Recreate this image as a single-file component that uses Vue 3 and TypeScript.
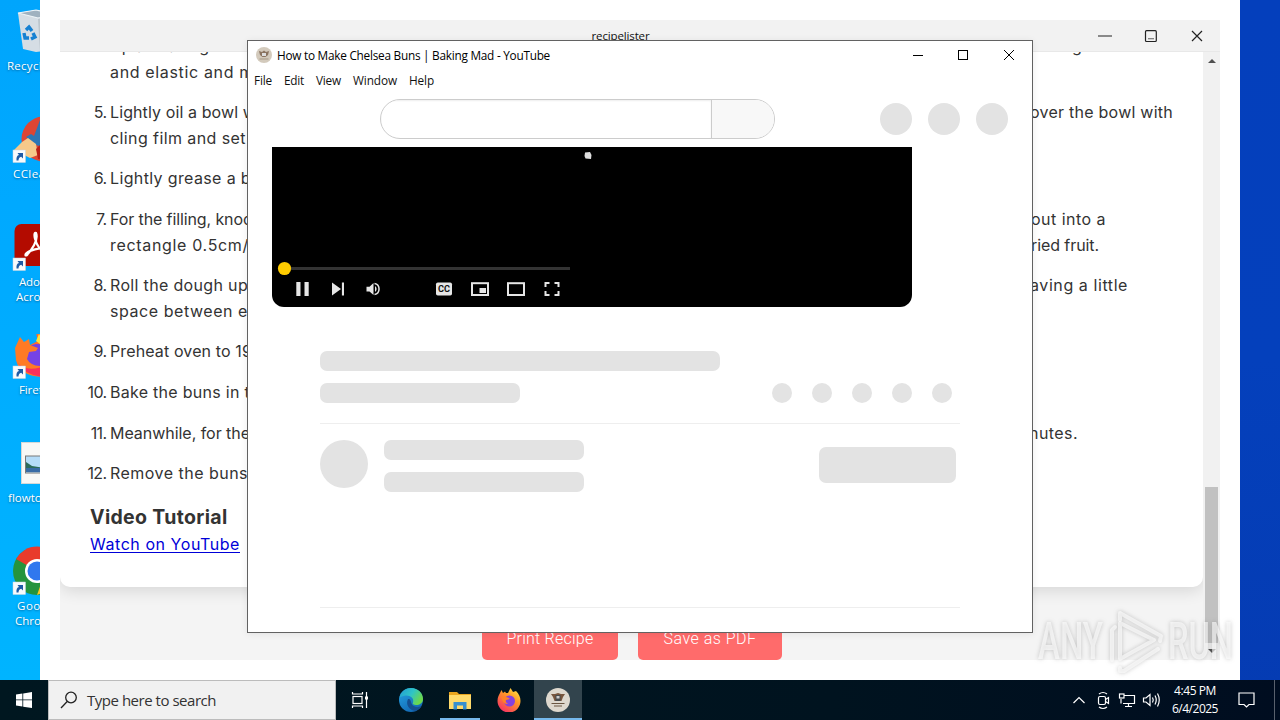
<script setup lang="ts">
interface Line { left: string; lw: number; right?: string; rx?: number; rw?: number }
interface Step { n?: number; lines: Line[] }

// Distributes letter spacing so that a label takes up the given width.
const vFit = {
  mounted(el: HTMLElement, binding: { value: number | undefined }) {
    if (!binding.value) return
    const range = document.createRange()
    range.selectNodeContents(el)
    const natural = range.getBoundingClientRect().width
    const count = (el.textContent || '').length
    el.style.letterSpacing = ((binding.value - natural) / count).toFixed(3) + 'px'
  },
}

const shortcuts = [
  { t: 'Recycle Bin', x: 7, y: 58, w: 63 },
  { t: 'CCleaner', x: 13, y: 166, w: 52 },
  { t: 'Adobe', x: 19, y: 274, w: 34 },
  { t: 'Acrobat', x: 16, y: 289, w: 42 },
  { t: 'Firefox', x: 19, y: 382, w: 36 },
  { t: 'flowtopics.jpg', x: 8, y: 490, w: 74 },
  { t: 'Google', x: 17, y: 598, w: 41 },
  { t: 'Chrome', x: 15, y: 613, w: 43 },
]

const steps: Step[] = [
  { lines: [
    { left: 'Up and along', lw: 99, right: 'ening', rx: 1039, rw: 43 },
    { left: 'and elastic and m', lw: 144 },
  ] },
  { n: 5, lines: [
    { left: 'Lightly oil a bowl w', lw: 146, right: 'over the bowl with', rx: 1030, rw: 143 },
    { left: 'cling film and set', lw: 136 },
  ] },
  { n: 6, lines: [{ left: 'Lightly grease a b', lw: 141 }] },
  { n: 7, lines: [
    { left: 'For the filling, knoc', lw: 142, right: 'out into a', rx: 1031, rw: 75 },
    { left: 'rectangle 0.5cm/', lw: 139, right: 'ried fruit.', rx: 1031, rw: 68 },
  ] },
  { n: 8, lines: [
    { left: 'Roll the dough up', lw: 138, right: 'aving a little', rx: 1030, rw: 98 },
    { left: 'space between e', lw: 138 },
  ] },
  { n: 9, lines: [{ left: 'Preheat oven to 19', lw: 142 }] },
  { n: 10, lines: [{ left: 'Bake the buns in t', lw: 140 }] },
  { n: 11, lines: [{ left: 'Meanwhile, for the', lw: 140, right: 'nutes.', rx: 1029, rw: 49 }] },
  { n: 12, lines: [{ left: 'Remove the buns', lw: 138 }] },
]

const menu = [
  { t: 'File', w: 18 }, { t: 'Edit', w: 20 }, { t: 'View', w: 25 },
  { t: 'Window', w: 44 }, { t: 'Help', w: 25 },
]
</script>

<template>
  <div class="desktop">
    <div class="icons">
      <svg width="40" height="680" viewBox="0 0 40 680">
        <!-- recycle bin -->
        <path d="M18 13 L36 10 L56 14 L52 50 L36 52 L23 49 Z" fill="#d5dde4" />
        <path d="M18 13 L36 10 L56 14 L38 18 Z" fill="#9fb1bf" stroke="#eef4f8" stroke-width="1.2" />
        <path d="M38 19 L40 52 L50 50 L54 15Z" fill="#bcc6cd" />
        <g fill="none" stroke="#1681d2" stroke-width="3.4">
          <path d="M26 30 L29 27 L32 31" /><path d="M24 33 L25 38 L29 38" /><path d="M31 39 L35 37 L33 33" />
        </g>
        <!-- cleaner -->
        <circle cx="44" cy="139" r="22.500" fill="#dd4534" />
        <path d="M26 137 L31 134 L34 136 L40 120 L45 118 L45 148 L36 145Z" fill="#2d76b6" />
        <path d="M14 150 L22 142 L28 138 L36 144 L38 155 L30 158Z" fill="#f6c98a" />
        <path d="M36 149 L42 143 L45 160 L38 159Z" fill="#b92018" />
        <!-- acrobat -->
        <rect x="14.500" y="224" width="46" height="42" rx="7" fill="#b30b00" />
        <path d="M26 256 C31 251 39 240 36 233 C33 231 34 244 43 252 M26 256 C23 253 34 248 45 248" fill="none" stroke="#fff" stroke-width="2.200" />
        <!-- fox -->
        <circle cx="38" cy="355" r="21" fill="#ff6a2b" />
        <path d="M14 333 H36 L38 341 L30 345 L24 342 L16 347Z" fill="#00acff" />
        <circle cx="37" cy="356" r="12" fill="#7542e5" />
        <path d="M15 348 L20 337 L24 342 L29 339 L30 345 L38 348 L36 351 L29 352 L27 359 Q31 367 45 366 L45 377 Q20 377 16 360Z" fill="#ff7a24" />
        <path d="M17 362 Q25 373 45 366 L45 377 Q25 376 17 362Z" fill="#f92f5c" />
        <path d="M36 341 L39 334 L45 342 L45 348Z" fill="#ffe13a" />
        <!-- picture file -->
        <rect x="21.500" y="442.500" width="34" height="41" fill="#f8f8f6" stroke="#d4d8d8" />
        <rect x="25.500" y="456" width="24" height="17" fill="#b5dcf8" stroke="#787878" />
        <path d="M26 462 L32 466 L45 468 L45 472 L26 472Z" fill="#2c6b5a" />
        <path d="M26 468 H45 V472 H26Z" fill="#386ba5" />
        <!-- chrome -->
        <circle cx="37" cy="571" r="24" fill="#25943d" />
        <path d="M37 571 L16 559 A24 24 0 0 1 58 559 Z" fill="#e93b2c" />
        <path d="M37 595 L44 575 L50 590Z" fill="#fcc629" />
        <circle cx="37" cy="571" r="12" fill="#fff" /><circle cx="37" cy="571" r="9.500" fill="#3078ee" />
        <g v-for="y in [150, 258, 366, 582]" :key="y" :transform="`translate(13 ${y})`">
          <rect width="12.500" height="12.500" fill="#f7fafc" stroke="#c5d3dd" stroke-width=".5" />
          <path d="M3.500 10.500 Q3 5.500 6 5 L4.500 3 H10 V8.500 L8.200 6.700 Q5.500 7.500 5.500 10.500Z" fill="#1e5aa5" />
        </g>
      </svg>
      <p v-for="s in shortcuts" :key="s.t" class="lab" :style="{ left: s.x + 'px', top: s.y + 'px' }"><span v-fit="s.w">{{ s.t }}</span></p>
    </div>

    <section class="app-frame">
      <div class="recipe-win">
        <header class="recipe-bar">
          <span class="recipe-title"><span v-fit="58">recipelister</span></span>
          <svg class="ctl" width="110" height="16" viewBox="0 0 110 16" fill="none" stroke="#222" stroke-width="1.200">
            <path d="M2 8 H16" stroke="#444" />
            <rect x="49.500" y="2.700" width="10.800" height="10.800" rx="1" /><path d="M52 10.700 H58" stroke="#777" />
            <path d="M96 3 L106 13 M106 3 L96 13" />
          </svg>
        </header>
        <div class="recipe-body">
          <main class="page">
            <article class="card">
              <div v-for="(s, i) in steps" :key="i" class="step">
                <span class="num">{{ s.n ? s.n + '.' : '' }}</span>
                <div class="txt">
                  <div v-for="(l, j) in s.lines" :key="j" class="line">
                    <span class="left"><span v-fit="l.lw">{{ l.left }}</span></span>
                    <span v-if="l.right" class="right" :style="{ marginLeft: (l.rx || 0) - 250 + 'px' }"><span v-fit="l.rw">{{ l.right }}</span></span>
                  </div>
                </div>
              </div>
              <h3><span v-fit="137.5">Video Tutorial</span></h3>
              <a class="watch"><span v-fit="150">Watch on YouTube</span></a>
            </article>
            <div class="actions">
              <button class="print"><span v-fit="87">Print Recipe</span></button>
              <button class="save"><span v-fit="93">Save as PDF</span></button>
            </div>
          </main>
          <div class="scroll">
            <i class="up"></i><i class="thumb"></i><i class="down"></i>
          </div>
        </div>
      </div>
    </section>

    <section class="video-win">
      <header class="video-bar">
        <svg width="16" height="16" viewBox="0 0 16 16">
          <circle cx="8" cy="8" r="8" fill="#d3cabc" />
          <path d="M3 4 L6 5 L8 3.500 L10 5 L13 4 L12 8 L9.500 10 H6.500 L4 8Z" fill="#8a7460" /><path d="M6 6h4v3H6z" fill="#ddd" />
          <path d="M3.500 12 H12.500" stroke="#a59885" />
        </svg>
        <span class="video-title"><span v-fit="273">How to Make Chelsea Buns | Baking Mad - YouTube</span></span>
        <svg class="ctl2" width="104" height="12" viewBox="0 0 104 12" fill="none" stroke="#000">
          <path d="M0 6.500 H10" /><rect x="45.500" y="1.500" width="9" height="9" /><path d="M91 1 L101 11 M101 1 L91 11" />
        </svg>
      </header>
      <nav class="menu"><span v-for="m in menu" :key="m.t" :style="{ width: m.w + 'px' }"><span v-fit="m.w">{{ m.t }}</span></span></nav>
      <div class="mast">
        <div class="search"><span class="box"></span><span class="go"></span></div>
        <div class="dots"><i></i><i></i><i></i></div>
      </div>
      <div class="player">
        <svg width="640" height="160" viewBox="0 0 640 160">
          <path d="M313 5.500 L318 5 L319.500 8 L319 12 L313.500 11.500 L312.500 9Z" fill="#ddd" />
          <path d="M12 121.500 H298" stroke="#333" stroke-width="3" />
          <circle cx="12.500" cy="121.500" r="6.600" fill="#fc0" />
          <g fill="#e6e6e6">
            <path d="M24.300 135 h4.200 v14 h-4.200z M32.500 135 h4.200 v14 h-4.200z" />
            <path d="M60 135.500 V148.500 L69 142z M69.900 135.500 h2.100 v13 h-2.100z" />
            <path d="M94.500 139.800 h3 L101.500 136 V148 L97.500 144.500 H94.500z" />
            <path d="M103 139 a3.600 3.600 0 0 1 0 6z" />
            <rect x="164" y="135.500" width="16" height="13" rx="1.800" />
          </g>
          <path d="M102.500 136.500 a5.600 5.600 0 0 1 0 11" fill="none" stroke="#e6e6e6" stroke-width="1.500" />
          <text x="166" y="145" textLength="12" lengthAdjust="spacingAndGlyphs" font-family="Roboto" font-weight="700" font-size="8.500" fill="#111">CC</text>
          <g fill="none" stroke="#e6e6e6" stroke-width="2">
            <rect x="200" y="136.200" width="16" height="11.800" />
            <rect x="236" y="136.200" width="16" height="11.800" />
            <path d="M273.500 140 V136 H277.500 M282.500 136 H286.500 V140 M286.500 144 V148 H282.500 M277.500 148 H273.500 V144" />
          </g>
          <rect x="207.500" y="141" width="6.500" height="5" fill="#e6e6e6" />
        </svg>
      </div>
      <div class="skeleton">
        <b class="title"></b>
        <div class="meta"><b class="sub"></b><div class="acts"><i v-for="n in 5" :key="n"></i></div></div>
        <div class="owner">
          <i class="avatar"></i>
          <div class="names"><b></b><b></b></div>
          <b class="subscribe"></b>
        </div>
      </div>
    </section>

    <svg class="mark" width="204" height="70" viewBox="0 0 204 70">
      <g fill="#fff" fill-opacity=".62" font-family="Roboto" font-size="51" font-weight="500">
        <text x="2" y="54" textLength="65" lengthAdjust="spacingAndGlyphs">ANY</text>
        <text x="132" y="54" textLength="65" lengthAdjust="spacingAndGlyphs">RUN</text>
      </g>
      <g fill="none" stroke="#fff" stroke-opacity=".62" stroke-width="4" stroke-linejoin="round" stroke-linecap="round">
        <path d="M84 18 V54 L118 35 Z" />
        <path d="M76 55 V25 L79 22 M84 15 V8 L125 31 L124 36 M84 63 V66 L88 66 L122 44" />
      </g>
    </svg>

    <footer class="taskbar">
      <div class="start"><svg width="16" height="16" viewBox="0 0 16 16" fill="#fff"><path d="M0 2.400 L6.400 1.500 V7.500 H0z M7.200 1.400 L16 0 V7.500 H7.200z M0 8.300 H6.400 V14.500 L0 13.600z M7.200 8.300 H16 V16 L7.200 14.700z" /></svg></div>
      <div class="find">
        <svg width="18" height="18" viewBox="0 0 18 18" fill="none" stroke="#222" stroke-width="1.300"><circle cx="11" cy="6.500" r="5.300" /><path d="M7.200 10.500 L1 17" /></svg>
        <span v-fit="129">Type here to search</span>
      </div>
      <div class="task view">
        <svg width="18" height="18" viewBox="0 0 18 18" fill="none" stroke="#fff" stroke-width="1.200"><rect x="2" y="5.500" width="9" height="7" /><path d="M1.500 1 V3 H11.500 V1 M1.500 17 V15 H11.500 V17 M15.500 1 V17" /><path d="M14 5.500 h3 v3 h-3z" fill="#fff" stroke="none" /></svg>
      </div>
      <div class="task">
        <svg width="24" height="24" viewBox="0 0 24 24">
          <defs>
            <linearGradient id="eg" x1="0" y1="0" x2="1" y2=".5"><stop offset="0" stop-color="#219bd6" /><stop offset=".55" stop-color="#2fc4c6" /><stop offset="1" stop-color="#6cd84a" /></linearGradient>
            <linearGradient id="eb" x1="0" y1="0" x2=".6" y2="1"><stop offset="0" stop-color="#26a5e4" /><stop offset="1" stop-color="#1268b4" /></linearGradient>
          </defs>
          <circle cx="12" cy="12" r="12" fill="url(#eb)" />
          <path d="M.4 9.500 C2 3 7 0 12 0 C19 0 24 5 24 11 C24 15 20.500 17 17 17 C14.500 17 13 16 14 14.500 C15.500 10 11 7 6.500 7.500 C3.500 8 1.300 9 .4 9.500Z" fill="url(#eg)" />
          <path d="M9 11 C6 17 11 23 17 22.700 C20 21.500 21.500 20 22.500 18 C18 20.500 13.500 18.500 12.500 15.500 C11.500 13 12 11 9 11Z" fill="#154f90" />
        </svg>
      </div>
      <div class="task open">
        <svg width="22" height="19" viewBox="0 0 22 19"><path d="M0 1 H8 L10 3 H22 V18 H0z" fill="#e9a51f" /><path d="M0 4 H22 V18 H0z" fill="#ffda6b" /><path d="M4.500 18.500 V11 H17.500 V18.500 H14 V14.500 H8 V18.500z" fill="#388fce" /></svg>
      </div>
      <div class="task">
        <svg width="24" height="24" viewBox="0 0 24 24">
          <defs><linearGradient id="fg" x1=".9" y1="0" x2=".2" y2="1"><stop offset="0" stop-color="#ffe84a" /><stop offset=".4" stop-color="#ff9a25" /><stop offset="1" stop-color="#f52b68" /></linearGradient></defs>
          <path d="M3 5 L4.500 2 L6 5 L8 3.500 L9 5 L11 5 L13.500 0 L16 4 L19 3 C22 6 23.500 9 23.500 13 A11.500 11.500 0 0 1 .5 13 C.5 9 2 7 3 5Z" fill="url(#fg)" />
          <circle cx="12.500" cy="13" r="5.500" fill="#8541de" /><path d="M4 8 L11 9.500 L13 11 L9 12 Q8 14 11 16 Q6 17 4 8Z" fill="#ff8226" />
        </svg>
      </div>
      <div class="task active">
        <svg width="24" height="24" viewBox="0 0 24 24"><circle cx="12" cy="12" r="12" fill="#ded8ce" /><path d="M5 6 L9 6 L12 5 L15 6 L19 6 L17 9 L15.500 13 H8.500 L7 9Z" fill="#77553d" /><path d="M9.500 7 h5 v6 h-5z" fill="#484b4d" /><path d="M10.500 8 h3 v2.500 h-3z" fill="#ccc" /><path d="M5.500 15.500 H18.500 M8 18 H16" stroke="#6a5541" stroke-width="1.200" /></svg>
      </div>
      <div class="tray">
        <svg width="92" height="20" viewBox="0 0 92 20" fill="none" stroke="#fff" stroke-width="1.200">
          <path d="M1.500 13 L7 7.500 L12.500 13" />
          <rect x="26.500" y="6.500" width="7" height="8" rx="1.500" /><path d="M33.500 9.500 L36.500 7.500 V13.500 L33.500 11.500 M27 4 Q31 1 35 4 M27 17 Q31 20 35 17" />
          <path d="M52 5.500 H62.500 V13.500 H51 M56.500 13.500 V16.500 M53 16.500 H60 M49 13.500 V9" /><rect x="47.500" y="4" width="4.500" height="4" />
          <path d="M71.500 8 H74 L78 4.500 V15.500 L74 12 H71.500z M80.500 7.500 Q82 10 80.500 12.500 M83 5.500 Q85.500 10 83 14.500 M85.500 3.500 Q89 10 85.500 16.500" />
        </svg>
        <div class="clock"><span><span v-fit="42">4:45 PM</span></span><span><span v-fit="46">6/4/2025</span></span></div>
        <svg class="note" width="17" height="18" viewBox="0 0 17 18" fill="none" stroke="#fff" stroke-width="1.200"><path d="M1 2 H16 V13.500 H11 L8.500 16 L6 13.500 H1z" /></svg>
        <i class="peek"></i>
      </div>
    </footer>
  </div>
</template>

<style>
html, body { margin: 0; overflow: hidden; }
</style>
<style scoped>
* { box-sizing: border-box; }
.desktop { position: relative; width: 1280px; height: 720px; overflow: hidden; background: linear-gradient(#043fbc, #0440bc 50%, #053bb2); font-family: "Open Sans", "Noto Sans", sans-serif; white-space: nowrap; }
.icons { position: absolute; left: 0; top: 0; width: 40px; height: 680px; overflow: hidden; background: linear-gradient(#00a5fc, #00a9ff 30%, #00b4ff); }
.icons svg { display: block; }
.lab { position: absolute; margin: 0; font-size: 11.5px; line-height: 16px; color: #fff; text-shadow: 0 1px 2px rgba(0, 50, 90, .55); }
.app-frame { position: absolute; left: 40px; top: 0; width: 1200px; height: 680px; padding: 20px; background: #fff; }
.recipe-win { height: 640px; display: flex; flex-direction: column; }
.recipe-bar { position: relative; height: 32px; flex: none; background: #f2f2f2; border-bottom: 1px solid #e8e8e8; display: flex; justify-content: center; }
.recipe-title { font-size: 11.5px; line-height: 32px; color: #111; margin-right: 39px; }
.ctl { position: absolute; left: 1036px; top: 8px; }
.recipe-body { height: 608px; display: flex; overflow: hidden; }
.page { width: 1143px; height: 608px; background: #f4f4f4; overflow: hidden; }
.card { height: 535px; background: #fff; border-radius: 0 0 10px 10px; box-shadow: 0 4px 16px rgba(0, 0, 0, .12); padding-left: 20px; overflow: hidden; font-family: Inter, sans-serif; font-size: 16px; line-height: 25.6px; color: #333; }
.step { display: flex; margin-bottom: 15px; }
.step:first-child { margin-top: -17.900px; }
.num { width: 30px; padding-right: 3.500px; text-align: right; letter-spacing: -.6px; flex: none; }
.line { display: flex; height: 25.600px; }
.left { width: 140px; overflow: hidden; flex: none; }
h3 { margin: 0 0 0 10px; font-size: 19.5px; line-height: 30px; font-weight: 700; }
.watch { display: inline-block; margin-left: 10px; line-height: 25px; color: #0000d8; text-decoration: underline; text-underline-offset: 2px; text-decoration-thickness: 1px; }
.actions { display: flex; gap: 20px; padding: 30px 0 0 422px; }
button { height: 43px; border: 0; border-radius: 5px; padding: 0; background: #ff6b6b; color: #fff; font: 300 16px/42px Roboto, sans-serif; }
.print { width: 136px; } .save { width: 144px; }
.scroll { width: 17px; height: 608px; background: #f1f1f1; display: flex; flex-direction: column; align-items: center; }
.up, .down { border: 4px solid transparent; }
.up { border-top: 0; border-bottom-color: #505050; margin-top: 7px; }
.thumb { width: 13px; height: 156px; margin-top: 424px; background: #c1c1c1; }
.down { border-bottom: 0; border-top-color: #505050; margin-top: 6px; }
.video-win { position: absolute; left: 247px; top: 40px; width: 786px; height: 593px; background: #fff; border: 1px solid #626262; box-shadow: 0 1px 7px rgba(0, 0, 0, .08); }
.video-bar { display: flex; align-items: center; height: 30px; padding: 0 15px 2px 8px; }
.video-title { margin-left: 5px; font-size: 11.8px; color: #000; line-height: 20px; }
.ctl2 { margin-left: auto; }
.menu { display: flex; gap: 12px; height: 24px; padding-left: 6px; font-size: 11.8px; line-height: 19px; color: #111; }
.mast { display: flex; height: 52px; padding: 4px 24px 8px 132px; justify-content: space-between; align-items: center; }
.search { display: flex; width: 395px; height: 40px; border: 1px solid #ccc; border-radius: 20px; overflow: hidden; }
.box { width: 331px; border-right: 1px solid #ccc; box-shadow: inset 0 1px 2px #eee; }
.go { flex: 1; background: #f8f8f8; }
.dots { display: flex; gap: 16px; }
.dots i { width: 32px; height: 32px; border-radius: 50%; background: #e3e3e3; }
.player { width: 640px; height: 160px; margin-left: 24px; background: #000; border-radius: 0 0 12px 12px; overflow: hidden; }
.player svg { display: block; }
.skeleton { margin: 44px 0 0 72px; width: 640px; height: 257px; border-bottom: 1px solid #eee; }
.skeleton b { display: block; height: 20px; border-radius: 7px; background: #e3e3e3; }
.skeleton i { display: block; border-radius: 50%; background: #e3e3e3; }
.skeleton .title { width: 400px; }
.meta { display: flex; justify-content: space-between; margin-top: 12px; height: 41px; border-bottom: 1px solid #eee; padding-right: 8px; }
.skeleton .sub { width: 200px; }
.acts { display: flex; gap: 20px; }
.acts i { width: 20px; height: 20px; }
.owner { display: flex; margin-top: 16px; }
.skeleton .avatar { width: 48px; height: 48px; margin-right: 16px; }
.names { width: 200px; display: flex; flex-direction: column; gap: 12px; }
.skeleton .subscribe { width: 137px; height: 36px; margin: 7px 4px 0 auto; }
.mark { position: absolute; left: 1036px; top: 605px; filter: drop-shadow(0 0 2px rgba(90, 90, 90, .5)); }
.taskbar { position: absolute; left: 0; top: 680px; width: 1280px; height: 40px; display: flex; background: linear-gradient(90deg, #001720, #00131f 65%, #000d20); }
.start { width: 48px; display: flex; align-items: center; justify-content: center; }
.find { width: 288px; background: #f1f1f1; border: 1px solid #bcbcbc; display: flex; align-items: center; padding-left: 11px; gap: 9px; font-size: 15px; color: #333; }
.find svg { flex: none; }
.task { width: 48px; height: 40px; display: flex; align-items: center; justify-content: center; margin-right: 1px; }
.view { margin-right: 3px; }
.open { box-shadow: inset 0 -2px #76b9ed; width: 40px; margin: 0 5px 0 4px; }
.active { background: #32444d; box-shadow: inset 0 -2px #76b9ed; }
.tray { display: flex; align-items: center; margin-left: auto; width: 208px; }
.clock { width: 57px; padding-left: 5px; display: flex; flex-direction: column; align-items: center; font-size: 12px; line-height: 18px; color: #fff; }
.note { margin-left: 17px; }
.peek { width: 1px; height: 40px; margin-left: 19px; background: #59616d; }
</style>
